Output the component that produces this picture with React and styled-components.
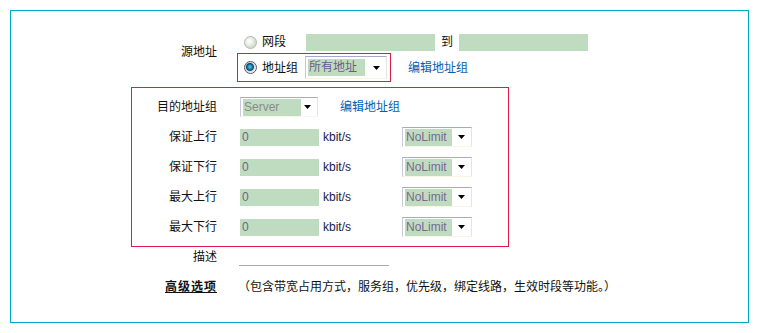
import React from 'react';
import styled, { createGlobalStyle } from 'styled-components';

const GlobalStyle = createGlobalStyle`
  body {
    margin: 0;
    background: #fff;
    font-family: "Liberation Sans", "Noto Sans CJK SC", sans-serif;
    font-size: 12px;
    color: #111;
  }
`;

const rates = ['保证上行', '保证下行', '最大上行', '最大下行'];

function App() {
  return (
    <React.Fragment>
      <GlobalStyle />
      <Panel>
        <SourceRow>
          <SourceLabel>源地址</SourceLabel>
          <SourceBody>
            <Line>
              <Radio $ml={7} />
              <RadioText>网段</RadioText>
              <GreenInput $w={129} $ml={20} />
              <To>到</To>
              <GreenInput $w={129} $ml={6} />
            </Line>
            <Line>
              <PickedBox>
                <Radio $checked />
                <RadioText>地址组</RadioText>
                <Select $w={82} $h={23} $ml={7} $hw={57} $color="#6a5c8c" value="所有地址" />
              </PickedBox>
              <Link $ml={17}>编辑地址组</Link>
            </Line>
          </SourceBody>
        </SourceRow>

        <DestBox>
          <DestRow>
            <DestLabel>目的地址组</DestLabel>
            <DestBody>
              <Select $w={78} $h={20} $hw={58} $color="#8a8a8a" value="Server" />
              <Link $ml={22}>编辑地址组</Link>
            </DestBody>
          </DestRow>
          {rates.map((r) => (
            <DestRow key={r}>
              <DestLabel>{r}</DestLabel>
              <DestBody>
                <GreenInput $w={79}>0</GreenInput>
                <Unit>kbit/s</Unit>
                <Select $w={70} $h={20} $hw={47} $color="#7a6890" value="NoLimit" />
              </DestBody>
            </DestRow>
          ))}
        </DestBox>

        <PlainRow>
          <Label>描述</Label>
          <DescInput />
        </PlainRow>

        <PlainRow $mt={10}>
          <Label $bold>高级选项</Label>
          <Hint>（包含带宽占用方式，服务组，优先级，绑定线路，生效时段等功能。）</Hint>
        </PlainRow>
      </Panel>
    </React.Fragment>
  );
}

function Select({ value, $w, $h, $ml, $hw, $color }) {
  return (
    <SelectBox $w={$w} $h={$h} $ml={$ml}>
      <Picked $w={$hw} $color={$color}>{value}</Picked>
      <svg width="7" height="4" viewBox="0 0 7 4" style={{ marginLeft: 'auto', marginRight: 6 }}>
        <polygon points="0,0 7,0 3.5,4" fill="#000" />
      </svg>
    </SelectBox>
  );
}

const Panel = styled.div`
  margin: 10px;
  width: 739px;
  height: 313px;
  box-sizing: border-box;
  border: 1px solid #00a8c8;
  padding-top: 20px;
`;

const SourceRow = styled.div`
  display: flex;
  align-items: flex-start;
`;

const SourceLabel = styled.div`
  width: 206px;
  text-align: right;
  padding-top: 14px;
  line-height: 14px;
`;

const SourceBody = styled.div`
  margin-left: 20px;
  display: flex;
  flex-direction: column;
`;

const Line = styled.div`
  display: flex;
  align-items: center;
  min-height: 22px;
`;

const PickedBox = styled.div`
  display: flex;
  align-items: center;
  width: 154px;
  height: 29px;
  box-sizing: border-box;
  border: 1px solid #dc1e46;
  padding-left: 6px;
`;

const Radio = styled.span`
  display: inline-block;
  width: 13px;
  height: 13px;
  margin-left: ${(p) => p.$ml || 0}px;
  box-sizing: border-box;
  border-radius: 50%;
  border: 1px solid ${(p) => (p.$checked ? '#5a5a5a' : '#b4b4b4')};
  background: ${(p) =>
    p.$checked
      ? 'radial-gradient(circle at 45% 45%, #6fd0f0 0, #1e8ac0 2px, #0a4a70 3.5px, #d8dcd8 4.5px, #f4f4f4 6px)'
      : 'radial-gradient(circle at 40% 40%, #ffffff 0, #eef4ea 3px, #d4dccf 6px)'};
  flex-shrink: 0;
`;

const RadioText = styled.span`
  margin-left: 5px;
  line-height: 14px;
`;

const GreenInput = styled.div`
  width: ${(p) => p.$w}px;
  height: 17px;
  margin-left: ${(p) => p.$ml || 0}px;
  background: #c0dcc0;
  color: #6e6488;
  line-height: 17px;
  padding-left: 2px;
  box-sizing: border-box;
  flex-shrink: 0;
`;

const To = styled.span`
  margin-left: 6px;
  width: 12px;
  line-height: 14px;
`;

const Link = styled.span`
  margin-left: ${(p) => p.$ml}px;
  color: #0a5cb0;
  line-height: 14px;
`;

const SelectBox = styled.div`
  display: flex;
  align-items: center;
  width: ${(p) => p.$w}px;
  height: ${(p) => p.$h}px;
  margin-left: ${(p) => p.$ml || 0}px;
  box-sizing: border-box;
  border-top: 1px solid #a8a8cc;
  border-left: 1px solid #c8c8dc;
  border-right: 1px solid #e4e4e4;
  border-bottom: 1px solid #fbf6e4;
  background: #fff;
  flex-shrink: 0;
`;

const Picked = styled.span`
  width: ${(p) => p.$w}px;
  height: 17px;
  margin-left: 2px;
  line-height: 17px;
  padding-left: 1px;
  box-sizing: border-box;
  background: #c0dcc0;
  color: ${(p) => p.$color};
  white-space: nowrap;
  overflow: hidden;
`;

const DestBox = styled.div`
  margin: 5px 0 0 120px;
  width: 378px;
  box-sizing: border-box;
  border: 1px solid #dc1e46;
  padding: 4px 0 4px;
`;

const DestRow = styled.div`
  display: flex;
  align-items: center;
  height: 30px;
`;

const DestLabel = styled.div`
  width: 85px;
  text-align: right;
  line-height: 14px;
`;

const DestBody = styled.div`
  margin-left: 23px;
  display: flex;
  align-items: center;
`;

const Unit = styled.span`
  margin-left: 4px;
  width: 79px;
  color: #1c1c48;
`;

const PlainRow = styled.div`
  display: flex;
  align-items: center;
  height: 20px;
  margin-top: ${(p) => p.$mt || 0}px;
`;

const Label = styled.div`
  width: 206px;
  text-align: right;
  line-height: 14px;
  font-weight: ${(p) => (p.$bold ? 700 : 400)};
  text-decoration: ${(p) => (p.$bold ? 'underline' : 'none')};
  letter-spacing: ${(p) => (p.$bold ? '1px' : '0')};
`;

const DescInput = styled.div`
  margin-left: 22px;
  width: 150px;
  height: 18px;
  box-sizing: border-box;
  border-bottom: 1px solid #a8a8a8;
`;

const Hint = styled.span`
  margin-left: 21px;
  line-height: 14px;
`;

export default App;
